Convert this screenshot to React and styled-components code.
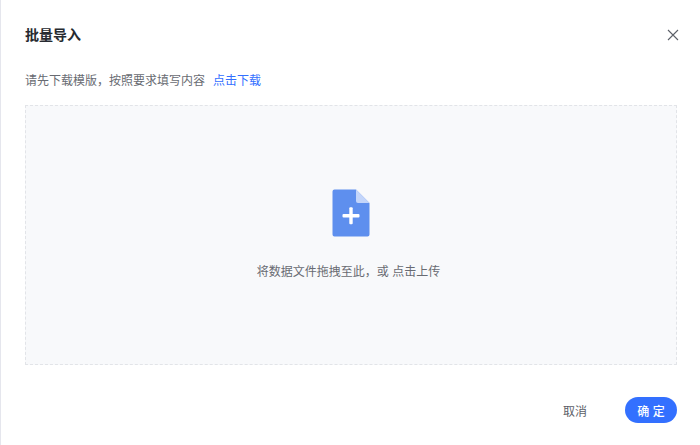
import React from 'react';
import styled, { createGlobalStyle } from 'styled-components';

const GlobalStyle = createGlobalStyle`
  html, body {
    margin: 0;
    padding: 0;
    background: #fff;
  }
  body {
    font-family: "Liberation Sans", "Noto Sans CJK SC", sans-serif;
  }
`;

const Modal = styled.div`
  box-sizing: border-box;
  width: 700px;
  height: 445px;
  background: #fff;
  border-left: 1px solid #e5e6ed;
  padding: 0 23px 0 24px;
  display: flex;
  flex-direction: column;
  overflow: hidden;
`;

const Header = styled.header`
  height: 70px;
  display: flex;
  align-items: center;
  justify-content: space-between;
`;

const Title = styled.h2`
  margin: 0 0 2px;
  font-size: 14px;
  font-weight: 700;
  color: #262a30;
`;

const CloseButton = styled.button`
  width: 12px;
  height: 12px;
  margin-right: -2px;
  padding: 0;
  border: 0;
  background: none;
  color: #5c6068;
  display: flex;
  cursor: pointer;
`;

const Hint = styled.p`
  margin: 0;
  height: 22px;
  line-height: 22px;
  font-size: 12px;
  color: #686b72;
`;

const Link = styled.a`
  margin-left: 8px;
  color: #3370ff;
  cursor: pointer;
`;

const DropZone = styled.div`
  box-sizing: border-box;
  margin-top: 13px;
  height: 260px;
  background: #f8f9fb;
  border: 1px dashed #e2e4e8;
  display: flex;
  flex-direction: column;
  align-items: center;
  padding-top: 83px;
`;

const DropText = styled.div`
  margin: 26px 5px 0 0;
  font-size: 12px;
  line-height: 18px;
  color: #686b72;
`;

const Footer = styled.footer`
  margin-top: 32px;
  display: flex;
  align-items: center;
  justify-content: flex-end;
  gap: 38px;
`;

const TextButton = styled.button`
  padding: 0;
  border: 0;
  background: none;
  font: inherit;
  font-size: 12px;
  color: #5c6068;
  cursor: pointer;
`;

const PrimaryButton = styled.button`
  width: 52px;
  height: 26px;
  padding: 0;
  border: 0;
  border-radius: 13px;
  background: #3370ff;
  color: #fff;
  font: inherit;
  font-size: 12px;
  font-weight: 500;
  cursor: pointer;
`;

function FileAddIcon() {
  return (
    <svg width="38" height="48" viewBox="0 0 38 48">
      <path d="M2.5 0.5H24L37.5 14V45.5a2 2 0 0 1-2 2H2.5a2 2 0 0 1-2-2V2.5a2 2 0 0 1 2-2z" fill="#5e8fee" />
      <path d="M24 0.5L37.5 14H26a2 2 0 0 1-2-2z" fill="#c3d5fa" />
      <rect x="10.5" y="25" width="17" height="3.4" rx="1" fill="#fff" />
      <rect x="17.3" y="18.2" width="3.4" height="17" rx="1" fill="#fff" />
    </svg>
  );
}

function App() {
  return (
    <>
      <GlobalStyle />
      <Modal>
        <Header>
          <Title>批量导入</Title>
          <CloseButton>
            <svg width="12" height="12" viewBox="0 0 12 12">
              <path d="M1 1L11 11M11 1L1 11" stroke="currentColor" strokeWidth="1.1" fill="none" />
            </svg>
          </CloseButton>
        </Header>
        <Hint>
          请先下载模版，按照要求填写内容
          <Link>点击下载</Link>
        </Hint>
        <DropZone>
          <FileAddIcon />
          <DropText>将数据文件拖拽至此，或 点击上传</DropText>
        </DropZone>
        <Footer>
          <TextButton>取消</TextButton>
          <PrimaryButton>确 定</PrimaryButton>
        </Footer>
      </Modal>
    </>
  );
}

export default App;
